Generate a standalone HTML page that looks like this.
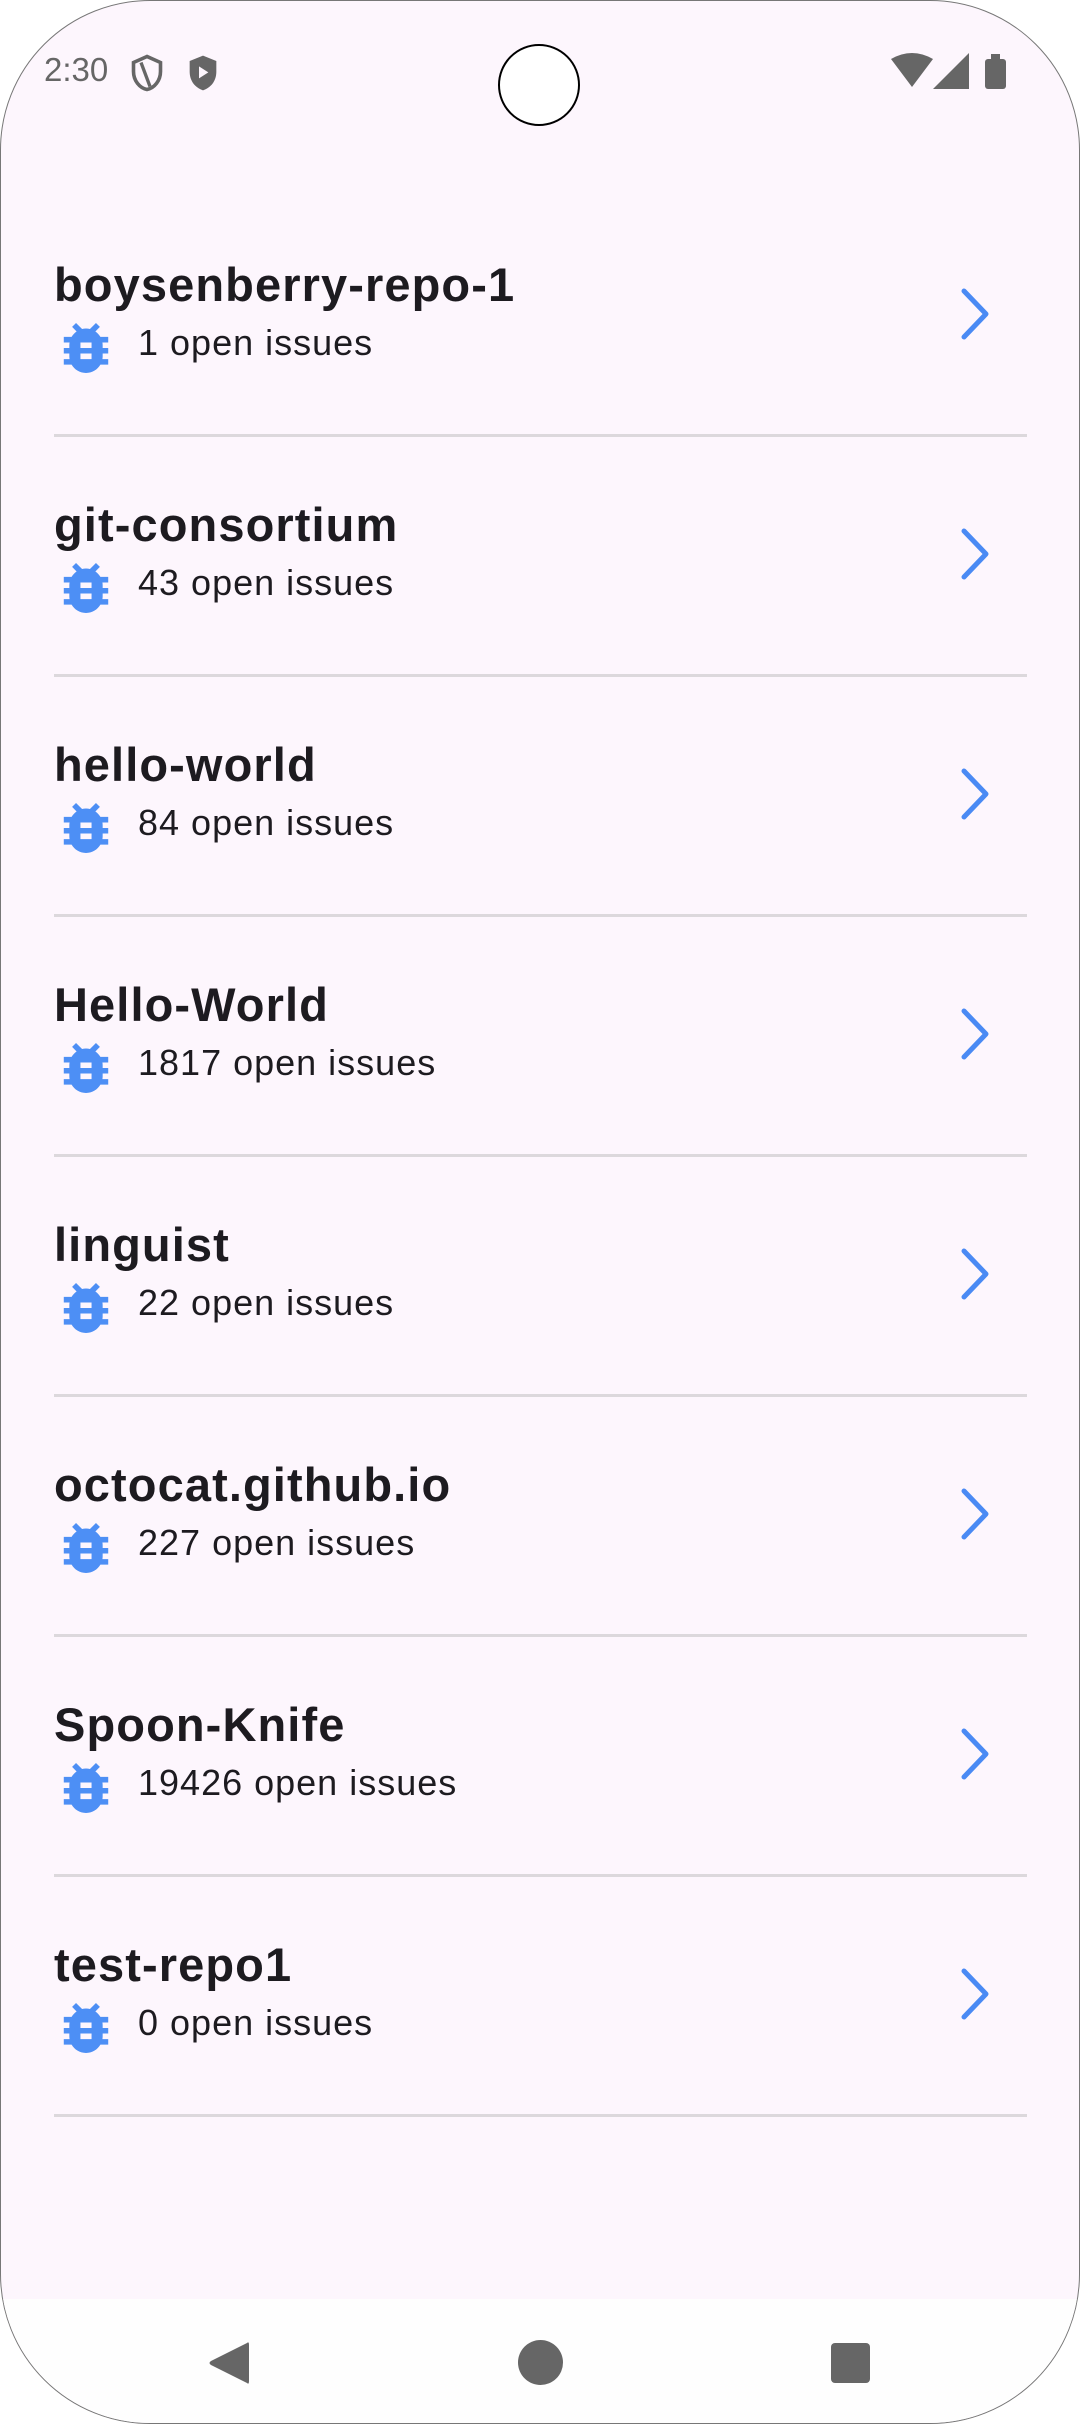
<!DOCTYPE html>
<html><head><meta charset="utf-8"><style>
html,body{margin:0;padding:0;width:1080px;height:2424px;background:#fff;overflow:hidden}
.scr{position:absolute;left:0;top:0;width:1078px;height:2422px;border:1px solid #777;border-radius:150px;background:#fdf6fd;overflow:hidden;font-family:"Liberation Sans",sans-serif}
.nav{position:absolute;left:0;top:2298px;width:100%;height:130px;background:#fefefe}
.item{position:absolute;left:0;width:100%;height:240px}
.t{position:absolute;left:53px;top:5px;font-size:47px;font-weight:bold;color:#1d1b20;letter-spacing:1.1px}
.s{position:absolute;left:137px;top:70px;font-size:36px;color:#1d1b20;letter-spacing:1px}
.bug{position:absolute;left:62px;top:71px}
.chev{position:absolute;left:955px;top:35px}
.div{position:absolute;left:53px;top:182px;width:973px;height:3px;background:#dcd8dc}
</style></head><body><div class="scr">
<div style="position:absolute;left:43px;top:50px;font-size:33px;color:#666">2:30</div>
<svg style="position:absolute;left:128px;top:52px" width="36" height="40" viewBox="0 0 24 26"><path d="M12 2L3 6v6c0 6 4 11 9 12 5-1 9-6 9-12V6z" fill="none" stroke="#666" stroke-width="2.4"/><path d="M8 6l6 16" stroke="#666" stroke-width="2.2"/></svg>
<svg style="position:absolute;left:186px;top:52px" width="32" height="40" viewBox="0 0 24 28"><path d="M12 1L2 5v8c0 7 4 12 10 14 6-2 10-7 10-14V5z" fill="#666"/><path d="M9 9v9l7-4.5z" fill="#fdf6fd"/></svg>
<div style="position:absolute;left:497px;top:43px;width:82px;height:82px;border-radius:50%;background:#fff;border:2px solid #000;box-sizing:border-box"></div>
<svg style="position:absolute;left:890px;top:52px" width="42" height="36" viewBox="0 0 42 36"><path d="M0 6Q21-6 42 6L21 34z" fill="#666"/></svg>
<svg style="position:absolute;left:932px;top:52px" width="36" height="36"><path d="M36 0V36H0z" fill="#666"/></svg>
<div style="position:absolute;left:984px;top:58px;width:21px;height:30px;background:#666;border-radius:3px"></div>
<div style="position:absolute;left:990px;top:53px;width:9px;height:6px;background:#666"></div>

<div class="item" style="top:251px"><div class="t">boysenberry-repo-1</div><svg class="bug" width="46" height="50" viewBox="4 3 16 18"><path fill="#4d8ff5" d="M20 8h-2.81c-.45-.78-1.07-1.45-1.82-1.96L17 4.410 15.59 3l-2.17 2.17C12.96 5.06 12.49 5 12 5s-.96.06-1.41.17L8.41 3 7 4.41l1.62 1.63C7.88 6.55 7.26 7.22 6.81 8H4v2h2.09c-.05.33-.09.66-.09 1v1H4v2h2v1c0 .34.04.67.09 1H4v2h2.81c1.04 1.79 2.97 3 5.19 3s4.15-1.21 5.19-3H20v-2h-2.09c.05-.33.09-.66.09-1v-1h2v-2h-2v-1c0-.34-.04-.67-.09-1H20V8zm-6 8h-4v-2h4v2zm0-4h-4v-2h4v2z"/></svg><div class="s">1 open issues</div><svg class="chev" width="40" height="54" viewBox="0 0 40 54"><path d="M8 4l22 23L8 50" fill="none" stroke="#4a8af4" stroke-width="5" stroke-linecap="round" stroke-linejoin="round"/></svg><div class="div"></div></div>

<div class="item" style="top:491px"><div class="t">git-consortium</div><svg class="bug" width="46" height="50" viewBox="4 3 16 18"><path fill="#4d8ff5" d="M20 8h-2.81c-.45-.78-1.07-1.45-1.82-1.96L17 4.41 15.59 3l-2.17 2.17C12.96 5.06 12.49 5 12 5s-.96.06-1.41.17L8.41 3 7 4.41l1.62 1.63C7.88 6.55 7.26 7.22 6.81 8H4v2h2.09c-.05.33-.09.66-.09 1v1H4v2h2v1c0 .34.04.67.09 1H4v2h2.81c1.04 1.79 2.97 3 5.19 3s4.15-1.21 5.19-3H20v-2h-2.09c.05-.33.09-.66.09-1v-1h2v-2h-2v-1c0-.34-.04-.67-.09-1H20V8zm-6 8h-4v-2h4v2zm0-4h-4v-2h4v2z"/></svg><div class="s">43 open issues</div><svg class="chev" width="40" height="54" viewBox="0 0 40 54"><path d="M8 4l22 23L8 50" fill="none" stroke="#4a8af4" stroke-width="5" stroke-linecap="round" stroke-linejoin="round"/></svg><div class="div"></div></div>

<div class="item" style="top:731px"><div class="t">hello-world</div><svg class="bug" width="46" height="50" viewBox="4 3 16 18"><path fill="#4d8ff5" d="M20 8h-2.81c-.45-.78-1.07-1.45-1.82-1.96L17 4.41 15.59 3l-2.17 2.17C12.96 5.06 12.49 5 12 5s-.96.06-1.41.17L8.41 3 7 4.41l1.62 1.63C7.88 6.55 7.26 7.22 6.81 8H4v2h2.09c-.05.33-.09.66-.09 1v1H4v2h2v1c0 .34.04.67.09 1H4v2h2.81c1.04 1.79 2.97 3 5.19 3s4.15-1.21 5.19-3H20v-2h-2.09c.05-.33.09-.66.09-1v-1h2v-2h-2v-1c0-.34-.04-.67-.09-1H20V8zm-6 8h-4v-2h4v2zm0-4h-4v-2h4v2z"/></svg><div class="s">84 open issues</div><svg class="chev" width="40" height="54" viewBox="0 0 40 54"><path d="M8 4l22 23L8 50" fill="none" stroke="#4a8af4" stroke-width="5" stroke-linecap="round" stroke-linejoin="round"/></svg><div class="div"></div></div>

<div class="item" style="top:971px"><div class="t">Hello-World</div><svg class="bug" width="46" height="50" viewBox="4 3 16 18"><path fill="#4d8ff5" d="M20 8h-2.81c-.45-.78-1.07-1.45-1.82-1.96L17 4.41 15.59 3l-2.17 2.17C12.96 5.06 12.49 5 12 5s-.96.06-1.41.17L8.41 3 7 4.41l1.62 1.63C7.88 6.55 7.26 7.22 6.81 8H4v2h2.09c-.05.33-.09.66-.09 1v1H4v2h2v1c0 .34.04.67.09 1H4v2h2.81c1.04 1.79 2.97 3 5.19 3s4.15-1.21 5.19-3H20v-2h-2.09c.05-.33.09-.66.09-1v-1h2v-2h-2v-1c0-.34-.04-.67-.09-1H20V8zm-6 8h-4v-2h4v2zm0-4h-4v-2h4v2z"/></svg><div class="s">1817 open issues</div><svg class="chev" width="40" height="54" viewBox="0 0 40 54"><path d="M8 4l22 23L8 50" fill="none" stroke="#4a8af4" stroke-width="5" stroke-linecap="round" stroke-linejoin="round"/></svg><div class="div"></div></div>

<div class="item" style="top:1211px"><div class="t">linguist</div><svg class="bug" width="46" height="50" viewBox="4 3 16 18"><path fill="#4d8ff5" d="M20 8h-2.81c-.45-.78-1.07-1.45-1.82-1.96L17 4.41 15.59 3l-2.17 2.17C12.96 5.06 12.49 5 12 5s-.96.06-1.41.17L8.41 3 7 4.41l1.62 1.63C7.88 6.55 7.26 7.22 6.81 8H4v2h2.09c-.05.33-.09.66-.09 1v1H4v2h2v1c0 .34.04.67.09 1H4v2h2.81c1.04 1.79 2.97 3 5.19 3s4.15-1.21 5.19-3H20v-2h-2.09c.05-.33.09-.66.09-1v-1h2v-2h-2v-1c0-.34-.04-.67-.09-1H20V8zm-6 8h-4v-2h4v2zm0-4h-4v-2h4v2z"/></svg><div class="s">22 open issues</div><svg class="chev" width="40" height="54" viewBox="0 0 40 54"><path d="M8 4l22 23L8 50" fill="none" stroke="#4a8af4" stroke-width="5" stroke-linecap="round" stroke-linejoin="round"/></svg><div class="div"></div></div>

<div class="item" style="top:1451px"><div class="t">octocat.github.io</div><svg class="bug" width="46" height="50" viewBox="4 3 16 18"><path fill="#4d8ff5" d="M20 8h-2.81c-.45-.78-1.07-1.45-1.82-1.96L17 4.41 15.59 3l-2.17 2.17C12.96 5.06 12.49 5 12 5s-.96.06-1.41.17L8.41 3 7 4.41l1.62 1.63C7.88 6.55 7.26 7.22 6.81 8H4v2h2.09c-.05.33-.09.66-.09 1v1H4v2h2v1c0 .34.04.67.09 1H4v2h2.81c1.04 1.79 2.97 3 5.19 3s4.15-1.21 5.19-3H20v-2h-2.09c.05-.33.09-.66.09-1v-1h2v-2h-2v-1c0-.34-.04-.67-.09-1H20V8zm-6 8h-4v-2h4v2zm0-4h-4v-2h4v2z"/></svg><div class="s">227 open issues</div><svg class="chev" width="40" height="54" viewBox="0 0 40 54"><path d="M8 4l22 23L8 50" fill="none" stroke="#4a8af4" stroke-width="5" stroke-linecap="round" stroke-linejoin="round"/></svg><div class="div"></div></div>

<div class="item" style="top:1691px"><div class="t">Spoon-Knife</div><svg class="bug" width="46" height="50" viewBox="4 3 16 18"><path fill="#4d8ff5" d="M20 8h-2.81c-.45-.78-1.07-1.45-1.82-1.96L17 4.41 15.59 3l-2.17 2.17C12.96 5.06 12.49 5 12 5s-.96.06-1.41.17L8.41 3 7 4.41l1.62 1.63C7.88 6.55 7.26 7.22 6.81 8H4v2h2.09c-.05.33-.09.66-.09 1v1H4v2h2v1c0 .34.04.67.09 1H4v2h2.81c1.04 1.79 2.97 3 5.19 3s4.15-1.21 5.19-3H20v-2h-2.09c.05-.33.09-.66.09-1v-1h2v-2h-2v-1c0-.34-.04-.67-.09-1H20V8zm-6 8h-4v-2h4v2zm0-4h-4v-2h4v2z"/></svg><div class="s">19426 open issues</div><svg class="chev" width="40" height="54" viewBox="0 0 40 54"><path d="M8 4l22 23L8 50" fill="none" stroke="#4a8af4" stroke-width="5" stroke-linecap="round" stroke-linejoin="round"/></svg><div class="div"></div></div>

<div class="item" style="top:1931px"><div class="t">test-repo1</div><svg class="bug" width="46" height="50" viewBox="4 3 16 18"><path fill="#4d8ff5" d="M20 8h-2.81c-.45-.78-1.07-1.45-1.82-1.96L17 4.41 15.59 3l-2.17 2.17C12.96 5.06 12.49 5 12 5s-.96.06-1.41.17L8.41 3 7 4.41l1.62 1.63C7.88 6.55 7.26 7.22 6.81 8H4v2h2.09c-.05.33-.09.66-.09 1v1H4v2h2v1c0 .34.04.67.09 1H4v2h2.81c1.04 1.79 2.97 3 5.19 3s4.15-1.21 5.19-3H20v-2h-2.09c.05-.33.09-.66.09-1v-1h2v-2h-2v-1c0-.34-.04-.67-.09-1H20V8zm-6 8h-4v-2h4v2zm0-4h-4v-2h4v2z"/></svg><div class="s">0 open issues</div><svg class="chev" width="40" height="54" viewBox="0 0 40 54"><path d="M8 4l22 23L8 50" fill="none" stroke="#4a8af4" stroke-width="5" stroke-linecap="round" stroke-linejoin="round"/></svg><div class="div"></div></div>

<div class="nav">
<svg style="position:absolute;left:206px;top:41px" width="44" height="46" viewBox="0 0 44 46"><path d="M40 3Q42 1 42 5V41Q42 45 40 43L4 25Q1 23 4 21z" fill="#666"/></svg>
<div style="position:absolute;left:517px;top:41px;width:45px;height:45px;border-radius:50%;background:#666"></div>
<div style="position:absolute;left:830px;top:44px;width:39px;height:40px;border-radius:4px;background:#666"></div>
</div>
</div></body></html>
